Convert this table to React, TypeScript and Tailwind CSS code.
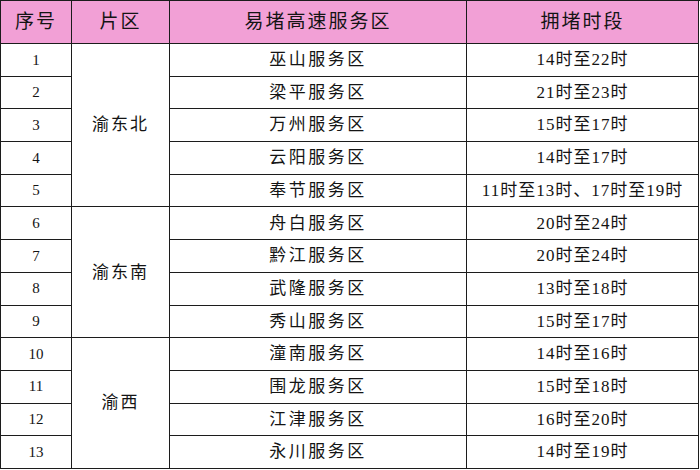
import React from "react";

const rows: { no: number; name: string; time: string }[] = [
  { no: 1, name: "巫山服务区", time: "14时至22时" },
  { no: 2, name: "梁平服务区", time: "21时至23时" },
  { no: 3, name: "万州服务区", time: "15时至17时" },
  { no: 4, name: "云阳服务区", time: "14时至17时" },
  { no: 5, name: "奉节服务区", time: "11时至13时、17时至19时" },
  { no: 6, name: "舟白服务区", time: "20时至24时" },
  { no: 7, name: "黔江服务区", time: "20时至24时" },
  { no: 8, name: "武隆服务区", time: "13时至18时" },
  { no: 9, name: "秀山服务区", time: "15时至17时" },
  { no: 10, name: "潼南服务区", time: "14时至16时" },
  { no: 11, name: "围龙服务区", time: "15时至18时" },
  { no: 12, name: "江津服务区", time: "16时至20时" },
  { no: 13, name: "永川服务区", time: "14时至19时" },
];

// Area cells are merged over several rows; keyed by the row where they start.
const areas: Record<number, { name: string; span: string }> = {
  1: { name: "渝东北", span: "row-span-5" },
  6: { name: "渝东南", span: "row-span-4" },
  10: { name: "渝西", span: "row-span-4" },
};

const cell = "flex items-center justify-center border-r border-b border-[#1c1c1c]";

export default function App() {
  return (
    <div className="h-[470px] w-[700px] bg-white font-['Liberation_Serif','Noto_Sans_CJK_SC',serif] text-[#141414]">
      <div className="grid grid-cols-[71px_98px_297px_232px] grid-rows-[43px_repeat(13,32.7px)] border-t border-l border-[#1c1c1c]">
        {/* Header */}
        {["序号", "片区", "易堵高速服务区", "拥堵时段"].map((h) => (
          <div key={h} className={`${cell} bg-[#f2a0d6] text-[19px] tracking-[2px]`}>
            {h}
          </div>
        ))}

        {rows.map((r) => (
          <React.Fragment key={r.no}>
            <div className={`${cell} text-[15px]`}>{r.no}</div>
            {areas[r.no] && (
              <div className={`${cell} ${areas[r.no].span} text-[17px] tracking-[2px]`}>
                {areas[r.no].name}
              </div>
            )}
            <div className={`${cell} text-[17px] tracking-[2.5px]`}>{r.name}</div>
            <div className={`${cell} text-[17px] tracking-[1px]`}>{r.time}</div>
          </React.Fragment>
        ))}
      </div>
    </div>
  );
}
